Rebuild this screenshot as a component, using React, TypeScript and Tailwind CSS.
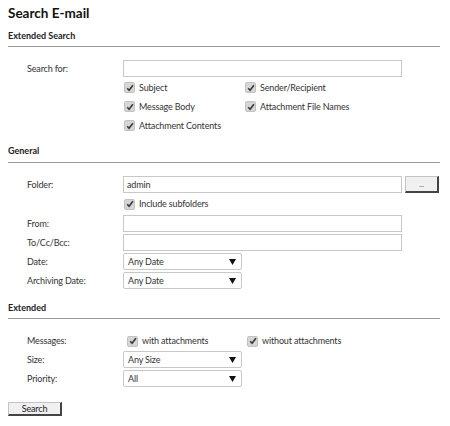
import React from "react";

const font = { fontFamily: 'Lato, "Open Sans", sans-serif' };

function Check({ label }: { label: string }) {
  return (
    <label className="flex items-center gap-[4px] h-[19px]">
      <span className="w-[11px] h-[11px] rounded-[2px] bg-[#d6d6d6] border border-[#c2c2c2] flex items-center justify-center">
        <svg width="8" height="8" viewBox="0 0 8 8">
          <path d="M1.2 4.2 L3.1 6.3 L6.9 1.3" stroke="#3a3a3a" strokeWidth="1.6" fill="none" />
        </svg>
      </span>
      <span>{label}</span>
    </label>
  );
}

function Input({ value = "" }: { value?: string }) {
  return (
    <div className="w-[279px] h-[17px] border border-[#c8c8c8] bg-white px-[3px] leading-[15px]">{value}</div>
  );
}

function Select({ value }: { value: string }) {
  return (
    <div className="w-[119px] h-[17px] border border-[#c8c8c8] rounded-[2px] bg-white pl-[4px] pr-[5px] flex items-center justify-between">
      <span>{value}</span>
      <svg width="7" height="6" viewBox="0 0 7 6">
        <path d="M0 0 H7 L3.5 6 Z" fill="#111" />
      </svg>
    </div>
  );
}

function Row({ label, children, h = "h-[17px]" }: { label: string; children: React.ReactNode; h?: string }) {
  return (
    <div className={`flex items-center ${h}`}>
      <div className="w-[115px] pl-[19px]">{label}</div>
      <div>{children}</div>
    </div>
  );
}

function Section({ title, gap = "mt-[3px]" }: { title: string; gap?: string }) {
  return (
    <div>
      <div className="font-bold text-[9px] text-[#222] leading-[14px] tracking-normal">{title}</div>
      <div className={`h-[1px] bg-[#9a9a9a] w-[432px] ${gap}`} />
    </div>
  );
}

export default function App() {
  return (
    <div className="w-[450px] h-[426px] bg-white text-[9px] tracking-[-0.15px] text-[#333] pl-[8px] pt-[3px]" style={font}>
      <div className="font-bold text-[13.5px] tracking-normal text-[#111] leading-[20px]">Search E-mail</div>
      <div className="mt-[6px]">
        <Section title="Extended Search" />
      </div>
      <div className="mt-[13px]">
        <Row label="Search for:">
          <Input />
        </Row>
        <div className="ml-[116px] mt-[1px] grid grid-cols-[121px_auto]">
          <Check label="Subject" />
          <Check label="Sender/Recipient" />
          <Check label="Message Body" />
          <Check label="Attachment File Names" />
          <Check label="Attachment Contents" />
        </div>
      </div>
      <div className="mt-[9px]">
        <Section title="General" gap="mt-[4px]" />
      </div>
      <div className="mt-[13px] flex flex-col gap-[2px]">
        <Row label="Folder:">
          <div className="flex gap-[3px]">
            <Input value="admin" />
            <button className="w-[34px] h-[17px] bg-[#f0f0f0] border border-[#c4c4c4] border-r-[#444] border-b-[#444] border-r-2 border-b-2 text-[8px] leading-[10px] text-[#666]">...</button>
          </div>
        </Row>
        <div className="ml-[116px] h-[18px] flex items-center">
          <Check label="Include subfolders" />
        </div>
        <Row label="From:">
          <Input />
        </Row>
        <Row label="To/Cc/Bcc:">
          <Input />
        </Row>
        <Row label="Date:">
          <Select value="Any Date" />
        </Row>
        <Row label="Archiving Date:">
          <Select value="Any Date" />
        </Row>
      </div>
      <div className="mt-[12px]">
        <Section title="Extended" />
      </div>
      <div className="mt-[13px] flex flex-col">
        <Row label="Messages:" h="h-[18px]">
          <div className="flex pl-[4px]">
            <div className="w-[120px]"><Check label="with attachments" /></div>
            <Check label="without attachments" />
          </div>
        </Row>
        <div className="mt-[1px]">
          <Row label="Size:">
            <Select value="Any Size" />
          </Row>
        </div>
        <div className="mt-[2px]">
          <Row label="Priority:">
            <Select value="All" />
          </Row>
        </div>
      </div>
      <button className="mt-[15px] w-[54px] h-[14px] bg-[#f0f0f0] border border-[#c4c4c4] border-r-[#444] border-b-[#444] border-r-2 border-b-2 text-[9px] leading-[11px] text-[#222] block">Search</button>
    </div>
  );
}
